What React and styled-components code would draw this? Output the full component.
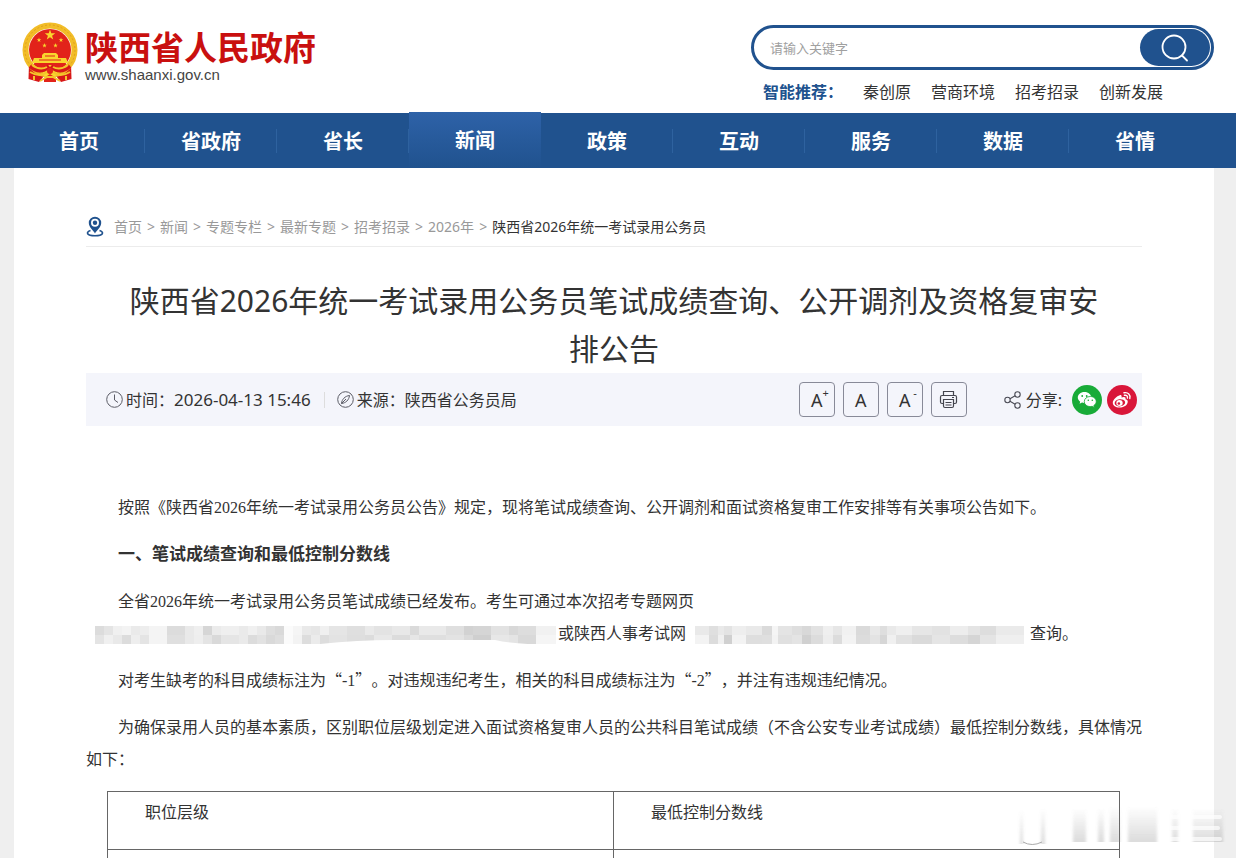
import React from "react"
import styled, { createGlobalStyle } from "styled-components"

const ui = `"Noto Sans", "Noto Sans CJK SC", sans-serif`
const song = `"Liberation Serif", "Noto Sans CJK SC", serif`
const blue = "#20528e"

const GlobalStyle = createGlobalStyle`
  * {
    box-sizing: border-box;
  }
  body {
    margin: 0;
    background: #efefef;
    color: #333;
    font-family: ${ui};
    font-size: 16px;
    text-spacing-trim: space-all;
  }
  a {
    color: inherit;
    text-decoration: none;
  }
  svg {
    display: block;
    flex: none;
  }
`

const Header = styled.header`
  display: flex;
  justify-content: space-between;
  height: 113px;
  padding: 0 22px;
  background: #fff;
`

const Logo = styled.a`
  display: flex;
  gap: 7px;
  padding-top: 22px;
`

const LogoText = styled.span`
  display: flex;
  flex-direction: column;
  padding-top: 3px;
`

const LogoName = styled.strong`
  color: #c9100f;
  font-family: "Noto Sans CJK SC", sans-serif;
  font-size: 33px;
  line-height: 42px;
`

const LogoUrl = styled.span`
  color: #444;
  font-family: "Liberation Sans", sans-serif;
  font-size: 15px;
  line-height: 16px;
`

const Finder = styled.div`
  width: 463px;
  padding-top: 25px;
`

const SearchForm = styled.form`
  display: flex;
  height: 45px;
  padding: 1px;
  border: 3px solid ${blue};
  border-radius: 23px;
`

const SearchInput = styled.input`
  flex: 1;
  min-width: 0;
  padding: 0 15px;
  border: 0;
  outline: 0;
  background: none;
  font-family: ${ui};
  font-size: 13px;
  &::placeholder {
    color: #a0a0a0;
  }
`

const SearchButton = styled.button`
  display: flex;
  align-items: center;
  justify-content: center;
  width: 70px;
  padding: 0;
  border: 0;
  border-radius: 19px;
  background: ${blue};
`

const Hints = styled.div`
  display: flex;
  gap: 20px;
  padding: 10px 12px 0;
  line-height: 24px;
`

const HintLabel = styled.b`
  color: ${blue};
`

const Nav = styled.nav`
  display: flex;
  height: 55px;
  padding: 0 35px 0 13px;
  background: ${blue};
`

const NavItem = styled.a`
  flex: 1;
  color: #fff;
  font-size: 20px;
  font-weight: bold;
  line-height: 57px;
  text-align: center;
  margin-top: ${p => (p.$active ? -1 : 0)}px;
  background: ${p =>
    p.$active
      ? `linear-gradient(#2e62a8, ${blue})`
      : `linear-gradient(#2e629f, #2e629f) right center / 1px 24px no-repeat`};
  &:last-child {
    background: none;
  }
`

const Page = styled.main`
  position: relative;
  margin: 0 22px 0 14px;
  padding: 39px 72px 0;
  background: #fff;
`

const Crumbs = styled.nav`
  display: flex;
  align-items: center;
  height: 40px;
  padding-bottom: 1px;
  border-bottom: 1px solid #ececec;
  color: #999;
  font-size: 14px;
`

const Arrow = styled.span`
  margin: 0 5px;
`

const PinIcon = styled.svg`
  margin-right: 10px;
`

const Current = styled.span`
  color: #333;
`

const Title = styled.h1`
  margin: 30px 0 0;
  padding: 0 36px;
  font-size: 30px;
  font-weight: normal;
  line-height: 48px;
  text-align: center;
`

const MetaBar = styled.div`
  display: flex;
  align-items: center;
  height: 53px;
  padding: 0 5px 0 20px;
  background: #f4f5fb;
  line-height: 24px;
`

const Meta = styled.span`
  display: flex;
  align-items: center;
  gap: 3px;
  padding-right: 13px;
  & + & {
    padding-left: 13px;
    background: linear-gradient(#ddd, #ddd) left center / 1px 16px no-repeat;
  }
`

const Stamp = styled.time`
  font-size: 17px;
`

const Tools = styled.div`
  display: flex;
  gap: 8px;
  margin-left: auto;
`

const ToolButton = styled.button`
  position: relative;
  display: flex;
  align-items: center;
  justify-content: center;
  width: 36px;
  height: 35px;
  padding: 0;
  border: 1px solid #888a98;
  border-radius: 4px;
  background: none;
  color: #333;
  font-family: ${ui};
  font-size: 18px;
  sup {
    position: absolute;
    top: 4px;
    right: 5px;
    font-size: 11px;
    line-height: 12px;
  }
`

const Share = styled.div`
  display: flex;
  align-items: center;
  gap: 5px;
  padding-left: 37px;
`

const ShareButton = styled.button`
  display: flex;
  align-items: center;
  justify-content: center;
  width: 30px;
  height: 30px;
  padding: 0;
  border: 0;
  border-radius: 50%;
  background: ${p => p.$color};
`

const ShareLabel = styled.span`
  padding-right: 5px;
`

const Article = styled.article`
  padding-top: 66px;
  font-family: ${song};
  line-height: 32px;
`

const Para = styled.p`
  margin: 0 0 15px;
  text-indent: 2em;
`

const Subhead = styled.h2`
  margin: 0 0 15px;
  padding-left: 32px;
  font-size: 17px;
  line-height: 32px;
`

// full-width quotes come from the Chinese face
const Quote = styled.span`
  font-family: "Noto Sans CJK SC", sans-serif;
  line-height: 1;
`

const Mosaic = styled.svg`
  display: inline-block;
  margin: ${p => p.$margin};
  vertical-align: top;
`

const ScoreTable = styled.table`
  width: calc(100% - 43px);
  margin: 0 22px 0 21px;
  border-collapse: collapse;
  table-layout: fixed;
  td {
    height: 58px;
    padding: 5px 37px 0;
    border: 1px solid #666;
    vertical-align: top;
  }
`

const Watermark = styled.svg`
  position: absolute;
  top: 636px;
  right: -12px;
`

const navItems = ["首页", "省政府", "省长", "新闻", "政策", "互动", "服务", "数据", "省情"]
const hints = ["秦创原", "营商环境", "招考招录", "创新发展"]
const crumbs = ["首页", "新闻", "专题专栏", "最新专题", "招考招录", "2026年"]

// each cell: x, width, grey of the upper band, grey of the lower band
const linkMosaic = [
  [0, 9, "#dcdcdc", "#e4e4e4"], [9, 9, "#e4e4e4", "#f0f0f0"], [18, 9, "#f0f0f0", "#e9e9e9"],
  [27, 9, "#f3f3f3", "#dcdcdc"], [36, 9, "#eaeaea", "#eeeeee"], [45, 9, "#ededed", "#e4e4e4"],
  [54, 18, "#f4f4f4", "#f4f4f4"], [72, 18, "#dcdcdc", "#dfdfdf"], [90, 9, "#e9e9e9", "#e9e9e9"],
  [99, 9, "#efefef", "#eeeeee"], [108, 9, "#d6d6d6", "#e4e4e4"], [117, 9, "#ebebeb", "#d9d9d9"],
  [126, 18, "#efefef", "#e5e5e5"], [144, 9, "#eaeaea", "#eaeaea"], [153, 9, "#f0f0f0", "#dcdcdc"],
  [162, 9, "#e9e9e9", "#e2e2e2"], [171, 9, "#dedede", "#d9d9d9"], [180, 9, "#d9d9d9", "#dedede"],
  [189, 9, "#fbfbfb", "#fbfbfb"], [198, 9, "#f5f5f5", "#f3f3f3"], [207, 9, "#e9e9e9", "#dddddd"],
  [216, 9, "#e6e6e6", "#ebebeb"], [225, 9, "#f0f0f0", "#dddddd"], [234, 18, "#e5e5e5", "#e3e3e3"],
  [252, 18, "#dfdfdf", "#dedede"], [270, 9, "#e9e9e9", "#dcdcdc"], [279, 18, "#e3e3e3", "#e8e8e8"],
  [297, 18, "#e8e8e8", "#dcdcdc"], [315, 9, "#dadada", "#e6e6e6"], [324, 27, "#e9e9e9", "#dfdfdf"],
  [351, 18, "#dfdfdf", "#e3e3e3"], [369, 9, "#d2d2d2", "#dadada"], [378, 18, "#d5d5d5", "#cfcfcf"],
  [396, 18, "#e2e2e2", "#e7e7e7"], [414, 9, "#d8d8d8", "#e4e4e4"], [423, 18, "#dddddd", "#d9d9d9"],
  [441, 20, "#f1f1f1", "#f5f5f5"],
]

const siteMosaic = [
  [0, 14, "#e9e9e9", "#f3f3f3"], [14, 9, "#dfdfdf", "#dcdcdc"], [23, 6, "#e9e9e9", "#f0f0f0"],
  [29, 8, "#e3e3e3", "#d0d0d0"], [37, 14, "#eeeeee", "#f3f3f3"], [51, 16, "#e9e9e9", "#dedede"],
  [67, 10, "#dadada", "#dfdfdf"], [77, 6, "#f5f5f5", "#f3f3f3"], [83, 14, "#e4e4e4", "#e0e0e0"],
  [97, 10, "#dedede", "#e4e4e4"], [107, 9, "#d8d8d8", "#d0d0d0"], [116, 12, "#e2e2e2", "#dcdcdc"],
  [128, 10, "#efefef", "#ededed"], [138, 9, "#e6e6e6", "#dcdcdc"], [147, 14, "#f1f1f1", "#f3f3f3"],
  [161, 14, "#dadada", "#dcdcdc"], [175, 10, "#e8e8e8", "#e3e3e3"], [185, 7, "#dedede", "#d6d6d6"],
  [192, 9, "#e9e9e9", "#f0f0f0"], [201, 16, "#efefef", "#e1e1e1"], [217, 20, "#e6e6e6", "#dadada"],
  [237, 18, "#e2e2e2", "#e5e5e5"], [255, 18, "#ededed", "#dddddd"], [273, 12, "#e4e4e4", "#d5d5d5"],
  [285, 16, "#dddddd", "#e4e4e4"], [301, 28, "#eaeaea", "#efefef"],
]

const Redacted = ({ cells, width, margin, label, children }) => (
  <Mosaic width={width} height="18" $margin={margin} role="img" aria-label={label}>
    {cells.map(([x, w, top, bottom]) => (
      <g key={x} shapeRendering="crispEdges">
        <rect x={x} width={w} height="9" fill={top} />
        <rect x={x} y="9" width={w} height="9" fill={bottom} />
      </g>
    ))}
    {children}
  </Mosaic>
)

const star = (cx, cy, r) =>
  Array.from({ length: 10 }, (_, i) => {
    const a = (Math.PI * i) / 5 - Math.PI / 2
    const d = i % 2 ? r * 0.4 : r
    return `${cx + d * Math.cos(a)},${cy + d * Math.sin(a)}`
  }).join(" ")

const Emblem = () => (
  <svg width="56" height="61" viewBox="0 0 56 61">
    <path d="M7 42 L6.500 57 L17 60 L22 54 H34 L39 60 L49.500 57 L49 42Z" fill="#d71718" />
    <circle cx="28" cy="28" r="24.500" fill="none" stroke="#f2bd27" strokeWidth="6" />
    <circle cx="28" cy="28" r="25" fill="none" stroke="#dfa01f" strokeWidth="1" strokeDasharray="2 2" />
    <circle cx="28" cy="28" r="21" fill="#e2231a" />
    <g fill="#f9d62e">
      <polygon points={star(28, 13, 5.5)} />
      <polygon points={star(17, 18, 2.4)} />
      <polygon points={star(39, 18, 2.4)} />
      <polygon points={star(22.5, 23.5, 2.4)} />
      <polygon points={star(33.5, 23.5, 2.4)} />
      <path d="M20 33 L22 31 H34 L36 33 V36 H44 L46 41 H10 L12 36 H20Z" />
      <circle cx="28" cy="50" r="7" />
    </g>
    <path d="M23 34 H33 M17 38 H39" stroke="#e2231a" />
    <path d="M8 44 Q18 53 27 44 M29 44 Q38 53 48 44" fill="none" stroke="#d71718" strokeWidth="4" />
    <path d="M10 43 Q18 49 25 45 M31 45 Q38 49 46 43 M8 50 Q18 56 25 50 M31 50 Q38 56 48 50" fill="none" stroke="#f4c52b" strokeWidth="2" />
    <path d="M22 56 L28 52 L34 56 V60 H22Z" fill="#e2231a" />
    <circle cx="28" cy="49" r="3" fill="#e2231a" />
    <path d="M18 59 L25 55 H31 L38 59 M12 58 V54 M44 58 V54" fill="none" stroke="#f4c52b" strokeWidth="2" />
  </svg>
)

const SearchIcon = () => (
  <svg width="28" height="28" viewBox="0 0 28 28" fill="none" stroke="#fff" strokeWidth="1.8" strokeLinecap="round">
    <circle cx="13" cy="13" r="11.500" />
    <path d="M21 21.500 L26 26.500" />
  </svg>
)

const ClockIcon = () => (
  <svg width="17" height="17" viewBox="0 0 17 17" fill="none" stroke="#5b5c66">
    <circle cx="8.500" cy="8.500" r="7.800" />
    <path d="M8.500 3.500 V9 L12 11.500" />
  </svg>
)

const CompassIcon = () => (
  <svg width="17" height="17" viewBox="0 0 17 17" fill="none" stroke="#5b5c66">
    <circle cx="8.500" cy="8.500" r="7.800" />
    <path d="M4.500 12.500 C4.800 8.500 8 5 12.500 4.500 C12 9 8.800 12 4.500 12.500 Z M4.500 12.500 L9 8" />
  </svg>
)

const PrintIcon = () => (
  <svg width="19" height="19" viewBox="0 0 19 19" fill="none" stroke="#44454e" strokeWidth="1.200">
    <path d="M4.500 5.500 V1.500 H14.500 V5.500 M4.500 13.500 H3 Q1.500 13.500 1.500 12 V7 Q1.500 5.500 3 5.500 H16 Q17.500 5.500 17.500 7 V12 Q17.500 13.500 16 13.500 H14.500" />
    <path d="M4.500 9.500 H14.500 V16 Q14.500 17.500 13 17.500 H6 Q4.500 17.500 4.500 16 Z M6.500 12.500 H12.500 M6.500 15 H12.500 M13 7.500 H15" />
  </svg>
)

const ShareIcon = () => (
  <svg width="17" height="18" viewBox="0 0 17 18" fill="none" stroke="#4a4b55" strokeWidth="1.100">
    <circle cx="3.500" cy="9" r="2.700" />
    <circle cx="13.500" cy="3.500" r="2.700" />
    <circle cx="13.500" cy="14.500" r="2.700" />
    <path d="M6 7.700 L11.100 4.800 M6 10.300 L11.100 13.200" />
  </svg>
)

const WechatIcon = () => (
  <svg width="20" height="18" viewBox="0 0 20 18">
    <path d="M7.500 1 C3.500 1 .8 3.500 .8 6.500 C.8 8.200 1.700 9.700 3.200 10.700 L2.600 12.800 L5 11.600 C5.800 11.800 6.600 12 7.500 12 C11.500 12 14.200 9.500 14.200 6.500 C14.200 3.500 11.500 1 7.500 1Z" fill="#fff" />
    <path d="M13.200 5.500 C9.800 5.500 7.300 7.800 7.300 10.600 C7.300 13.400 9.800 15.600 13.200 15.600 C13.900 15.600 14.600 15.500 15.200 15.300 L17.300 16.500 L16.800 14.500 C18.300 13.600 19.200 12.200 19.200 10.600 C19.200 7.800 16.700 5.500 13.200 5.500Z" fill="#fff" stroke="#18ab38" strokeWidth=".8" />
    <g fill="#18ab38">
      <circle cx="5.200" cy="5" r=".9" />
      <circle cx="9.700" cy="5" r=".9" />
      <circle cx="11.300" cy="9.300" r=".8" />
      <circle cx="15.300" cy="9.300" r=".8" />
    </g>
  </svg>
)

const WeiboIcon = () => (
  <svg width="20" height="18" viewBox="0 0 20 18">
    <path d="M7.800 4.200 C9.300 3.700 10 4.700 9.500 6.500 C11.800 5.600 14.200 5.700 13.500 8.300 C15.500 8.900 16.200 10.100 15.500 12 C14.500 15 11 16.600 7.400 16.500 C3.700 16.400 .8 14.600 .8 11.700 C.8 8.600 4.800 5 7.800 4.200Z" fill="#fff" />
    <ellipse cx="7.900" cy="11.800" rx="5.300" ry="3.600" transform="rotate(-8 7.900 11.800)" fill="#d9163a" />
    <ellipse cx="7.500" cy="12" rx="3.200" ry="2.900" fill="#fff" />
    <circle cx="6.900" cy="12.500" r="1.300" fill="#d9163a" />
    <path d="M12 1.800 C16 .8 18.900 3.800 17.800 7.500 M12.400 4.300 C14.500 3.800 15.900 5.200 15.400 7" fill="none" stroke="#fff" strokeWidth="1.400" strokeLinecap="round" />
  </svg>
)

const App = () => (
  <>
    <GlobalStyle />
    <Header>
      <Logo href="#">
        <Emblem />
        <LogoText>
          <LogoName>陕西省人民政府</LogoName>
          <LogoUrl>www.shaanxi.gov.cn</LogoUrl>
        </LogoText>
      </Logo>
      <Finder>
        <SearchForm onSubmit={e => e.preventDefault()}>
          <SearchInput aria-label="请输入关键字" placeholder="请输入关键字" />
          <SearchButton aria-label="搜索">
            <SearchIcon />
          </SearchButton>
        </SearchForm>
        <Hints>
          <HintLabel>智能推荐：</HintLabel>
          {hints.map(h => (
            <a href="#" key={h}>{h}</a>
          ))}
        </Hints>
      </Finder>
    </Header>
    <Nav>
      {navItems.map(item => (
        <NavItem href="#" key={item} $active={item === "新闻"}>
          {item}
        </NavItem>
      ))}
    </Nav>
    <Page>
      <Crumbs>
        <PinIcon width="18" height="21" viewBox="0 0 18 21">
          <path d="M4.500 14.500 C-.5 16 .5 19.800 9 19.800 C17.500 19.800 18.500 16 13.500 14.500" fill="none" stroke={blue} strokeWidth="1.600" />
          <path d="M9 17.500 C7.500 14.500 2.800 11.500 2.800 7 A6.200 6.200 0 0 1 15.200 7 C15.200 11.500 10.500 14.500 9 17.500Z" fill={blue} />
          <circle cx="9" cy="6.800" r="4" fill="#fff" />
          <circle cx="9" cy="6.800" r="2.200" fill={blue} />
        </PinIcon>
        {crumbs.map(c => (
          <React.Fragment key={c}>
            <a href="#">{c}</a>
            <Arrow>&gt;</Arrow>
          </React.Fragment>
        ))}
        <Current>陕西省2026年统一考试录用公务员</Current>
      </Crumbs>
      <Title>陕西省2026年统一考试录用公务员笔试成绩查询、公开调剂及资格复审安排公告</Title>
      <MetaBar>
        <Meta>
          <ClockIcon />
          <span>
            时间：<Stamp>2026-04-13 15:46</Stamp>
          </span>
        </Meta>
        <Meta>
          <CompassIcon />
          来源：陕西省公务员局
        </Meta>
        <Tools>
          <ToolButton>A<sup>+</sup></ToolButton>
          <ToolButton>A</ToolButton>
          <ToolButton>A<sup>-</sup></ToolButton>
          <ToolButton aria-label="打印">
            <PrintIcon />
          </ToolButton>
        </Tools>
        <Share>
          <ShareIcon />
          <ShareLabel>分享:</ShareLabel>
          <ShareButton $color="#18ab38" aria-label="微信">
            <WechatIcon />
          </ShareButton>
          <ShareButton $color="#d9163a" aria-label="微博">
            <WeiboIcon />
          </ShareButton>
        </Share>
      </MetaBar>
      <Article>
        <Para>按照《陕西省2026年统一考试录用公务员公告》规定，现将笔试成绩查询、公开调剂和面试资格复审工作安排等有关事项公告如下。</Para>
        <Subhead>一、笔试成绩查询和最低控制分数线</Subhead>
        <Para>
          全省2026年统一考试录用公务员笔试成绩已经发布。考生可通过本次招考专题网页
          <br />
          <Redacted cells={linkMosaic} width={461} margin="8px 2px 0 9px" label="专题网页">
            <path d="M225 18 Q262 14 300 14 H400 Q422 19 452 18 Z" fill="#fff" />
          </Redacted>
          或陕西人事考试网
          <Redacted cells={siteMosaic} width={329} margin="8px 6px 0 9px" label="考试网" />
          查询。
        </Para>
        <Para>
          对考生缺考的科目成绩标注为<Quote>“</Quote>-1<Quote>”</Quote>。对违规违纪考生，相关的科目成绩标注为<Quote>“</Quote>-2<Quote>”</Quote>，并注有违规违纪情况。
        </Para>
        <Para>为确保录用人员的基本素质，区别职位层级划定进入面试资格复审人员的公共科目笔试成绩（不含公安专业考试成绩）最低控制分数线，具体情况如下：</Para>
        <ScoreTable>
          <tbody>
            <tr>
              <td>职位层级</td>
              <td>最低控制分数线</td>
            </tr>
            <tr>
              <td />
              <td />
            </tr>
          </tbody>
        </ScoreTable>
      </Article>
      <Watermark width="214" height="44" viewBox="0 0 214 44" aria-hidden="true">
        <defs>
          <linearGradient id="fade" x1="0" y1="0" x2="0" y2="1">
            <stop offset="0" stopColor="#888" stopOpacity="0" />
            <stop offset="1" stopColor="#888" stopOpacity=".3" />
          </linearGradient>
          <filter id="soft">
            <feGaussianBlur stdDeviation="1.500 0.500" />
          </filter>
        </defs>
        <g fill="url(#fade)" filter="url(#soft)">
          <rect x="8" y="6" width="3" height="34" />
          <rect x="29" y="4" width="4" height="36" />
          <rect x="61" y="4" width="13" height="34" />
          <rect x="86" y="4" width="6" height="34" />
          <rect x="98" y="2" width="10" height="36" />
          <rect x="116" y="2" width="29" height="36" />
          <rect x="160" y="4" width="6" height="34" />
          <rect x="181" y="4" width="30" height="34" />
        </g>
        <path d="M11 38 Q20 43 30 38" fill="none" stroke="#aaa" />
        <path d="M150 13 H208 M150 24 H206 M150 35 H208" stroke="#fff" strokeWidth="4" strokeLinecap="round" opacity=".7" />
      </Watermark>
    </Page>
  </>
)

export default App
